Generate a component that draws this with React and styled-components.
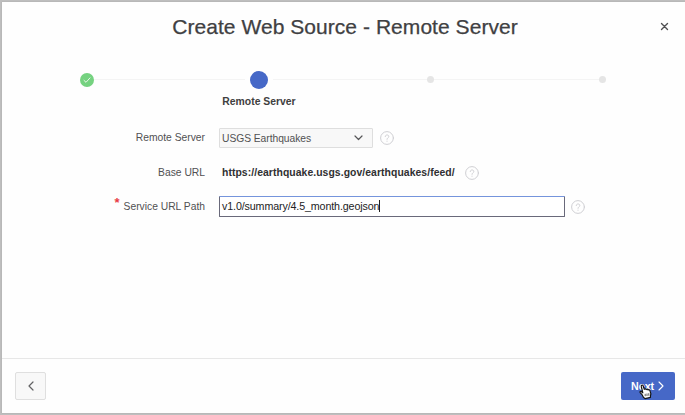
import React from 'react';
import styled, { createGlobalStyle } from 'styled-components';

const GlobalStyle = createGlobalStyle`
  * { box-sizing: border-box; }
  body { margin: 0; background: #bebebe; font-family: "Liberation Sans", Arial, sans-serif; }
`;

const Backdrop = styled.div`
  width: 685px;
  height: 415px;
  padding: 2px 0 2px 2px;
  background: #bebebe;
  overflow: hidden;
`;

const Dialog = styled.div`
  display: flex;
  flex-direction: column;
  width: 683px;
  height: 411px;
  background: #fefefe;
  box-shadow: 0 0 1px #9c9c9c;
  color: #404040;
`;

const Header = styled.header`
  display: grid;
  grid-template-columns: 40px 1fr 40px;
  align-items: center;
  height: 50px;
`;

const Title = styled.h1`
  grid-column: 2;
  margin: 0;
  padding-left: 3px;
  text-align: center;
  font-size: 21px;
  line-height: 30px;
  font-weight: 400;
  letter-spacing: 0.05px;
  color: #404042;
  -webkit-text-stroke: 0.25px #404042;
`;

const CloseButton = styled.button`
  display: flex;
  padding: 0;
  border: 0;
  background: none;
  width: 9px;
  height: 9px;
  margin: 0 0 1px 15px;
`;

const Steps = styled.ol`
  display: grid;
  grid-template-columns: repeat(4, 171.6px);
  margin: 0 0 0 -0.4px;
  padding: 0;
  list-style: none;
  height: 74px;
`;

const Step = styled.li`
  display: flex;
  flex-direction: column;
  align-items: center;
  padding-top: 18px;
`;

const Track = styled.div`
  display: grid;
  grid-template-columns: 1fr auto 1fr;
  align-items: center;
  align-self: stretch;
  height: 19px;
`;

const Rail = styled.span`
  height: 1px;
  background: ${(p) => (p.$hidden ? 'transparent' : '#f4f4f4')};
  margin: ${(p) => p.$gap || '0'};
`;

const Marker = styled.span`
  display: flex;
  align-items: center;
  justify-content: center;
  width: ${(p) => p.$size}px;
  height: ${(p) => p.$size}px;
  border-radius: 50%;
  background: ${(p) => p.$color};
`;

const StepLabel = styled.span`
  margin-top: 6px;
  font-size: 10.4px;
  line-height: 14px;
  font-weight: 700;
  white-space: nowrap;
`;

const Form = styled.form`
  flex: 1;
  display: flex;
  flex-direction: column;
`;

const FieldRow = styled.div`
  display: grid;
  grid-template-columns: 203px auto 14px;
  justify-content: start;
  align-items: center;
  height: ${(p) => p.$height}px;
`;

const Label = styled.label`
  text-align: right;
  font-size: 10.3px;
  line-height: 14px;
  color: #505052;
`;

const Required = styled.span`
  margin-right: 4px;
  color: #e83c44;
  font-size: 13px;
  line-height: 0;
  font-weight: 700;
  vertical-align: 3px;
`;

const SelectBox = styled.div`
  display: flex;
  align-items: center;
  justify-content: space-between;
  width: 154px;
  height: 20px;
  margin: 0 7px 0 14px;
  padding: 0 9px 0 2px;
  border: 1px solid #dedede;
  border-radius: 1px;
  background: #f8f8f8;
  font-size: 10.3px;
  letter-spacing: -0.05px;
  color: #505052;
`;

const UrlText = styled.span`
  width: 233px;
  margin: 0 10px 0 17px;
  font-size: 10.4px;
  line-height: 14px;
  font-weight: 700;
  letter-spacing: 0.065px;
  color: #303032;
  white-space: nowrap;
`;

const InputBox = styled.div`
  display: flex;
  align-items: center;
  width: 346px;
  height: 21px;
  margin: 0 6px 0 14px;
  padding: 0 0 1px 2px;
  border: 1px solid #69697a;
  border-top-color: #7594dc;
  border-radius: 1px;
  background: #fff;
  font-size: 10.7px;
  letter-spacing: -0.12px;
  color: #222224;
`;

const Caret = styled.span`
  width: 1px;
  height: 12px;
  background: #202020;
`;

const Footer = styled.footer`
  display: flex;
  justify-content: space-between;
  align-items: flex-start;
  height: 55px;
  padding: 13px 10px 0 13px;
  border-top: 1px solid #e7e7e7;
`;

const BackButton = styled.button`
  display: flex;
  align-items: center;
  justify-content: center;
  width: 31px;
  height: 28px;
  padding: 0;
  border: 1px solid #dfdfdf;
  border-radius: 2px;
  background: #f8f8f8;
`;

const NextButton = styled.button`
  position: relative;
  display: flex;
  align-items: center;
  width: 54px;
  height: 28px;
  padding: 0 0 1px 10px;
  gap: 4px;
  border: 0;
  border-radius: 2px;
  background: #4668c7;
  color: #fff;
  font-family: inherit;
  font-size: 10.7px;
  font-weight: 700;
`;

const Pointer = styled.svg`
  position: absolute;
  left: 18px;
  top: 12px;
`;

const Icon = styled.svg`
  display: block;
  flex: none;
  fill: none;
  stroke-linecap: round;
  stroke-linejoin: round;
`;

const Help = () => (
  <Icon width="14" height="14" viewBox="0 0 14 14" stroke="#cfcfd3" strokeWidth="1">
    <circle cx="7" cy="7" r="6.4" />
    <path d="M5.2 5.5C5.2 3.4 8.8 3.4 8.8 5.5C8.8 6.9 7 6.8 7 8.3M7 10.1V10.3" />
  </Icon>
);

const steps = [
  { size: 14, color: '#75d280', done: true },
  { size: 18, color: '#4668c7', label: 'Remote Server' },
  { size: 7, color: '#e5e5e5' },
  { size: 7, color: '#e5e5e5' },
];

export default function App() {
  return (
    <>
      <GlobalStyle />
      <Backdrop>
        <Dialog role="dialog">
          <Header>
            <Title>Create Web Source - Remote Server</Title>
            <CloseButton aria-label="Close">
              <Icon width="9" height="9" viewBox="0 0 9 9" stroke="#505052" strokeWidth="1.4">
                <path d="M1.5 1.5L7.5 7.5M7.5 1.5L1.5 7.5" />
              </Icon>
            </CloseButton>
          </Header>
          <Steps>
            {steps.map((step, i) => (
              <Step key={i}>
                <Track>
                  <Rail $hidden={i === 0} $gap={i === 1 ? '0 5px 0 0' : '0'} />
                  <Marker $size={step.size} $color={step.color}>
                    {step.done && (
                      <Icon width="8" height="8" viewBox="0 0 8 8" stroke="#e9f7e9" strokeWidth="1">
                        <path d="M1 4.4L3 6.3L7 1.9" />
                      </Icon>
                    )}
                  </Marker>
                  <Rail $hidden={i === 3} $gap={i === 1 ? '0 0 0 5px' : '0'} />
                </Track>
                {step.label && <StepLabel>{step.label}</StepLabel>}
              </Step>
            ))}
          </Steps>
          <Form>
            <FieldRow $height={24}>
              <Label>Remote Server</Label>
              <SelectBox>
                <span>USGS Earthquakes</span>
                <Icon width="9" height="6" viewBox="0 0 9 6" stroke="#555557" strokeWidth="1.2">
                  <path d="M1 1L4.5 4.5L8 1" />
                </Icon>
              </SelectBox>
              <Help />
            </FieldRow>
            <FieldRow $height={45}>
              <Label>Base URL</Label>
              <UrlText>https://earthquake.usgs.gov/earthquakes/feed/</UrlText>
              <Help />
            </FieldRow>
            <FieldRow $height={23}>
              <Label><Required>*</Required>Service URL Path</Label>
              <InputBox>
                <span>v1.0/summary/4.5_month.geojson</span>
                <Caret />
              </InputBox>
              <Help />
            </FieldRow>
          </Form>
          <Footer>
            <BackButton aria-label="Back">
              <Icon width="6" height="10" viewBox="0 0 6 10" stroke="#626264" strokeWidth="1.2">
                <path d="M5 1L1 5L5 9" />
              </Icon>
            </BackButton>
            <NextButton>
              Next
              <Icon width="6" height="10" viewBox="0 0 6 10" stroke="#fff" strokeWidth="1.1">
                <path d="M1 1L5 5L1 9" />
              </Icon>
              <Pointer width="14" height="16" viewBox="0 0 14 16">
                <path
                  d="M4.4 13.2L3.4 11.2L1.2 8.6C.5 7.5 1.8 6.9 2.6 7.8L3.8 8.8L2.3 2.4C2 .8 3.7 .5 4.2 2L5.3 5.3C6 4.7 6.8 4.9 7.2 5.5C7.8 4.9 8.8 5.2 9.1 5.9C9.9 5.4 10.8 5.9 11 6.8L11.9 9.8L11.4 12L11.5 13.4L6 14.6Z"
                  fill="#fff" stroke="#151515" strokeWidth="1.2" strokeLinejoin="round"
                />
                <path d="M6.2 9.8V12.2M8 9.5V12M9.8 9.2V11.7" stroke="#151515" strokeWidth=".7" />
              </Pointer>
            </NextButton>
          </Footer>
        </Dialog>
      </Backdrop>
    </>
  );
}
